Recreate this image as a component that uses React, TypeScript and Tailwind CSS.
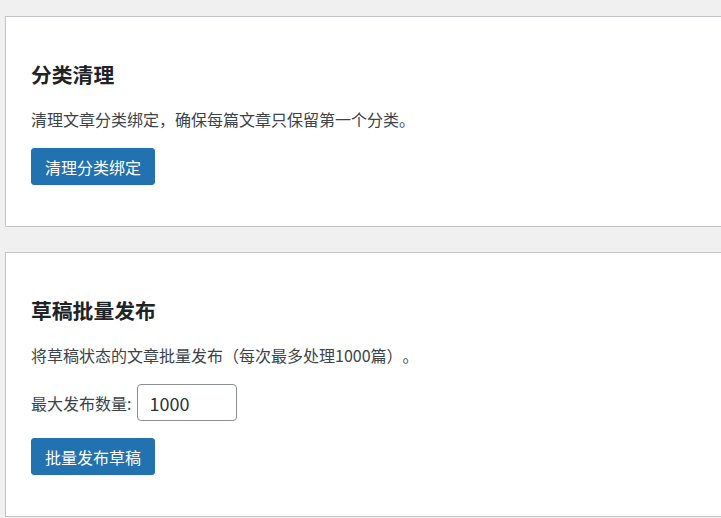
import React, { useState } from 'react';

const font = { fontFamily: '"Noto Sans CJK SC", "Noto Sans", sans-serif' };

const Card: React.FC<{ title: string; children: React.ReactNode }> = ({ title, children }) => (
  <div className="w-[740px] bg-white border border-[#c3c4c7] pt-[43px] pb-[41px] pl-[25px]">
    <h2 className="text-[20.8px] leading-[28px] font-bold text-[#1d2327]">{title}</h2>
    {children}
  </div>
);

const Button: React.FC<{ label: string }> = ({ label }) => (
  <button className="h-[37px] px-[13px] rounded-[3px] bg-[#2271b1] text-white text-[16px] leading-[37px] border border-[#2271b1]">
    {label}
  </button>
);

const App: React.FC = () => {
  const [max, setMax] = useState('1000');

  return (
    <div className="min-h-[518px] bg-[#f0f0f1] pt-[16px] pl-[5px] overflow-hidden [text-spacing-trim:space-all]" style={font}>
      <Card title="分类清理">
        <p className="mt-[19px] text-[16px] leading-[24px] text-[#3c434a]">清理文章分类绑定，确保每篇文章只保留第一个分类。</p>
        <div className="mt-[17px]">
          <Button label="清理分类绑定" />
        </div>
      </Card>

      <div className="h-[25px]" />

      <Card title="草稿批量发布">
        <p className="mt-[19px] text-[16px] leading-[24px] text-[#3c434a]">将草稿状态的文章批量发布（每次最多处理1000篇）。</p>
        <div className="mt-[17px] flex items-center gap-[6px] text-[16px] text-[#3c434a]">
          <label>最大发布数量:</label>
          <input
            value={max}
            onChange={e => setMax(e.target.value)}
            className="w-[100px] h-[37px] px-[11px] border border-[#8c8f94] rounded-[4px] text-[18px] text-[#2c3338] outline-none"
          />
        </div>
        <div className="mt-[17px]">
          <Button label="批量发布草稿" />
        </div>
      </Card>
    </div>
  );
};

export default App;
